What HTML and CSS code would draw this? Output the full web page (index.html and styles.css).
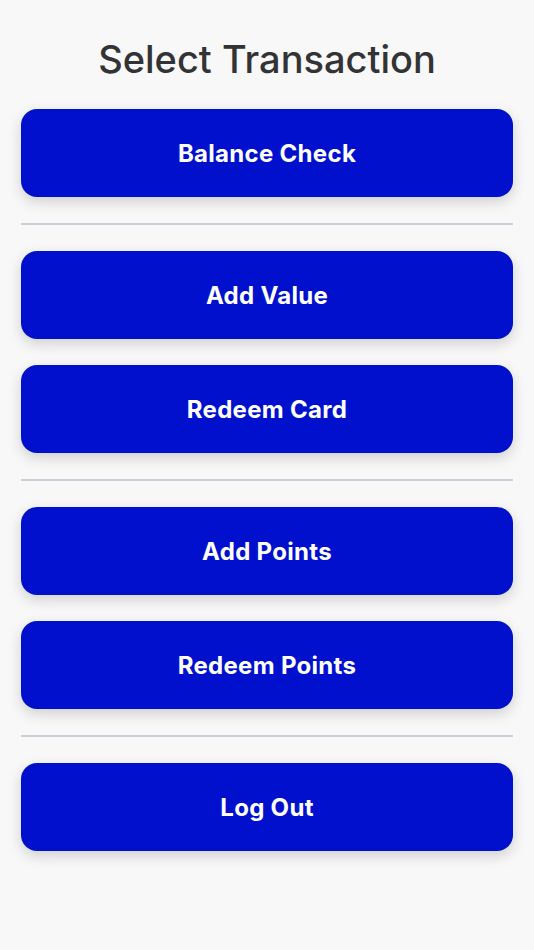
FILE: index.html
```html
<!DOCTYPE html>
<html lang="en">
	<head>
		<meta charset="UTF-8">
		<meta name="viewport" content="width=device-width, initial-scale=1.0">
		<title>Select Transaction</title>
		<link rel="stylesheet" href="styles.css">
	</head>
	<body>
	<div class="screen">
		<h1 class="title">Select Transaction</h1>
		<div class="menu">
			<button class="btn">Balance Check</button>
			<hr class="divider">
			<button class="btn">Add Value</button>
			<button class="btn">Redeem Card</button>
			<hr class="divider">
			<button class="btn">Add Points</button>
			<button class="btn">Redeem Points</button>
			<hr class="divider">
			<button class="btn">Log Out</button>
		</div>
	</div>
	</body>
</html>
```

FILE: styles.css
```css
html, body {
	margin: 0;
	height: 100%;
	background-color: #f8f8f8;
}

body {
	font-family: Inter, "Open Sans", sans-serif;
}

.screen {
	padding: 0 21px;
}

.title {
	margin: 0;
	padding-top: 37px;
	height: 109px;
	box-sizing: border-box;
	text-align: center;
	font-size: 38px;
	font-weight: 500;
	line-height: 44px;
	color: #333336;
}

.menu {
	display: flex;
	flex-direction: column;
	gap: 26px;
}

.btn {
	height: 88px;
	border: none;
	border-radius: 16px;
	background-color: #0010cc;
	color: white;
	font-family: inherit;
	font-size: 24px;
	font-weight: 700;
	letter-spacing: .3px;
	box-shadow: 0 5px 14px rgba(0, 0, 0, .16);
}

.divider {
	margin: 0;
	border: none;
	height: 2px;
	background-color: #cfcfdb;
}
```
